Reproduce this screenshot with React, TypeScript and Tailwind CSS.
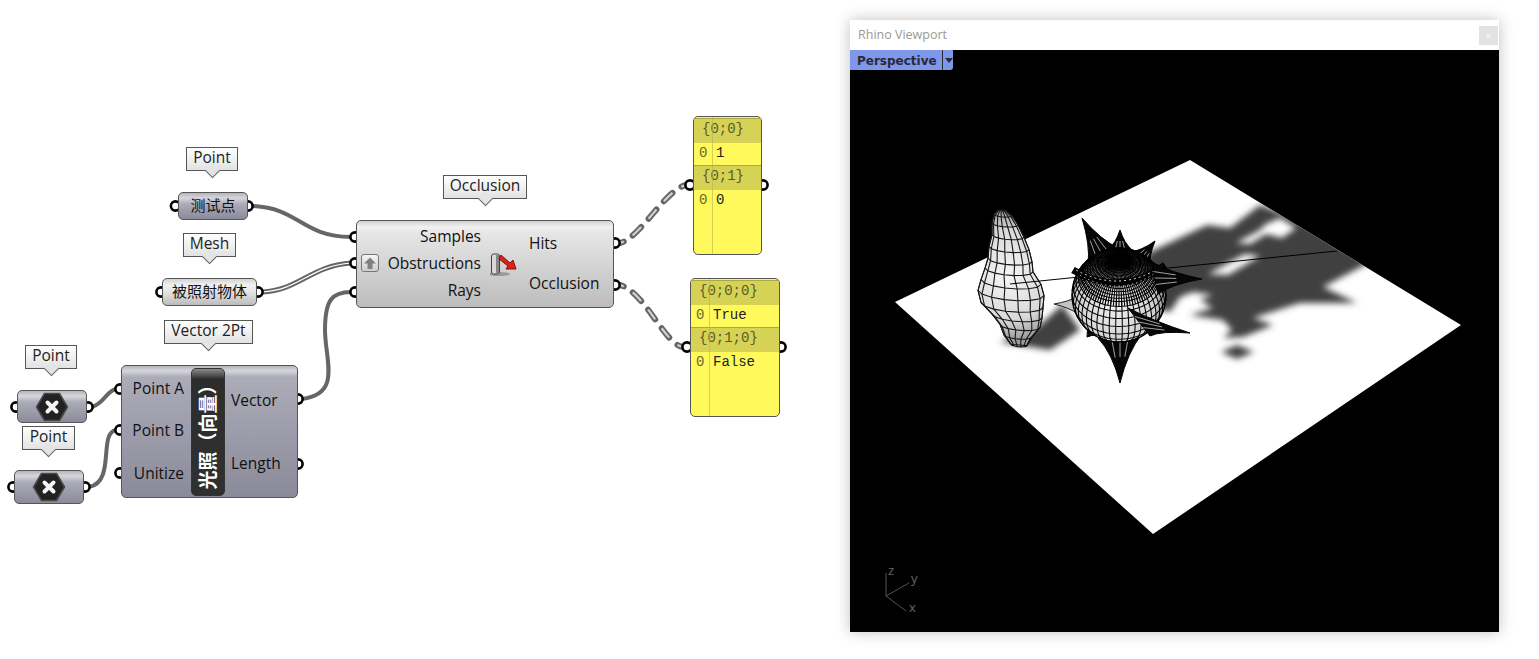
const UI_FONT = "font-['Open_Sans','Noto_Sans_CJK_SC',sans-serif]";
const LIGHT = "bg-[linear-gradient(#d2d2d2_0,#f1f1f1_6px,#e6e6e6_12px,#bcbcbc_100%)]";
const DARK = "bg-[linear-gradient(#b4b4bd_0,#d6d6dc_5px,#acacb8_11px,#8b8a9a_100%)]";

const grips = [
  [175.5, 206], [248, 206], [161, 292], [258, 292], [16, 407], [88, 407], [13, 487], [85, 487],
  [120, 389], [120, 430], [120, 473], [298, 399], [298, 464],
  [355, 237], [355, 263], [355, 292], [615, 243], [615, 285],
  [690, 185], [763, 185], [687, 347], [781, 347],
];

function Wires() {
  const dashed = ["M620 243C640 238 665 190 686 185", "M620 285C645 292 665 345 683 347"];
  return (
    <svg className="absolute left-0 top-0" width="850" height="659" fill="none">
      <g stroke="#666" strokeWidth="4">
        <path d="M252 206C300 208 300 236 351 237" />
        <path d="M302 399C342 394 325 360 325 330C325 300 332 292 351 292" />
        <path d="M92 407C105 403 106 391 116 389" />
        <path d="M89 487C116 482 98 433 116 430" />
      </g>
      <path d="M262 292C300 290 310 266 351 263" stroke="#666" strokeWidth="5" />
      <path d="M262 292C300 290 310 266 351 263" stroke="#fff" strokeWidth="1.2" />
      {dashed.map((d) => (
        <g key={d}>
          <path d={d} stroke="#666" strokeWidth="6" strokeDasharray="12 11" strokeDashoffset="8" strokeLinecap="round" />
          <path d={d} stroke="#d0d0d0" strokeWidth="2.2" strokeDasharray="12 11" strokeDashoffset="8" />
        </g>
      ))}
      {grips.map(([x, y]) => (
        <circle key={`${x}-${y}`} cx={x} cy={y} r="4.6" fill="#fff" stroke="#000" strokeWidth="2.6" />
      ))}
    </svg>
  );
}

function Tag({ label, className }: { label: string; className: string }) {
  return (
    <div className={`absolute flex h-[24px] items-center justify-center border border-[#555] bg-[linear-gradient(#fff,#e2e2e2)] pb-[2px] text-[15.5px] text-[#222] ${className}`}>
      <span className="relative z-10">{label}</span>
      <div className="absolute left-1/2 top-full -ml-[5.5px] -mt-[5.5px] size-[11px] rotate-45 border-b border-r border-[#666] bg-[#e4e4e4]" />
    </div>
  );
}

function Hex() {
  return (
    <svg width="34" height="30" viewBox="0 0 34 30">
      <path d="M9.5 1.5H24.5L32.5 15L24.5 28.5H9.5L1.5 15Z" fill="#222" stroke="#4a4a4a" strokeWidth="1.5" strokeLinejoin="round" />
      <path d="M12.5 10.5L21.5 19.5M21.5 10.5L12.5 19.5" stroke="#f4f4f4" strokeWidth="4" strokeLinecap="round" />
    </svg>
  );
}

function Panel({ className, rows }: { className: string; rows: [string, string][] }) {
  return (
    <div className={`absolute overflow-hidden rounded-[5px] border border-[#555] bg-[#fff95c] pt-[1px] font-['Liberation_Mono',monospace] text-[14px] leading-none ${className}`}>
      <div className="absolute bottom-0 left-[18px] top-0 w-px bg-[#b8b64a]/60" />
      {rows.map(([head, value]) => (
        <div key={head}>
          <div className="flex h-[25px] items-center border-t border-[#aaa83e] bg-[#d5d255] pb-[4px] pl-[8px] text-[#5a5a2c]">{head}</div>
          <div className="flex h-[22px] items-center pb-[2px] pl-[5px]">
            <span className="w-[17px] text-[#6a6826]">0</span>
            <span className="text-[#222]">{value}</span>
          </div>
        </div>
      ))}
    </div>
  );
}

// ---- viewport geometry ----
type P = [number, number];
const toPath = (pts: P[]) => pts.map((p, i) => `${i ? "L" : "M"}${p[0].toFixed(1)} ${p[1].toFixed(1)}`).join("");

const blobRows = [
  [210, 1002, 4], [215, 1003, 9], [224, 1005, 13], [236, 1008, 16], [248, 1009, 20], [260, 1010, 22], [270, 1009, 24],
  [282, 1011, 30], [293, 1011, 33], [305, 1012, 31], [316, 1017, 25], [326, 1020, 20], [336, 1018, 14], [345, 1019, 8],
];
const blobThetas = [-90, -62, -36, -12, 12, 36, 62, 90].map((d) => (d * Math.PI) / 180);
const blobPoint = ([y, cx, r]: number[], t: number): P => [cx + r * Math.sin(t), y + r * 0.22 * Math.cos(t) + r * 0.08 * Math.sin(t)];
const blobOutline = toPath([
  ...blobRows.map((row) => blobPoint(row, -Math.PI / 2)),
  ...[...blobRows].reverse().map((row) => blobPoint(row, Math.PI / 2)),
]) + "Z";
const blobLines = [
  ...blobRows.map((row) => toPath(blobThetas.map((t) => blobPoint(row, t)))),
  ...blobThetas.map((t) => toPath(blobRows.map((row) => blobPoint(row, t)))),
];

const C: P = [1119, 295];
const R = 47;
const TILT = (44 * Math.PI) / 180;
function sphere(latDeg: number, lonDeg: number): [number, number, number] {
  const lat = (latDeg * Math.PI) / 180;
  const lon = (lonDeg * Math.PI) / 180;
  const x = Math.cos(lat) * Math.sin(lon);
  const y = Math.sin(lat);
  const z = Math.cos(lat) * Math.cos(lon);
  return [C[0] + R * x, C[1] - R * (y * Math.cos(TILT) - z * Math.sin(TILT)), y * Math.sin(TILT) + z * Math.cos(TILT)];
}
function visible(samples: [number, number, number][]) {
  let d = "";
  let pen = false;
  for (const [x, y, z] of samples) {
    if (z < 0) {
      pen = false;
      continue;
    }
    d += `${pen ? "L" : "M"}${x.toFixed(1)} ${y.toFixed(1)}`;
    pen = true;
  }
  return d;
}
const range = (from: number, to: number, step: number) => {
  const out: number[] = [];
  for (let v = from; v <= to; v += step) out.push(v);
  return out;
};
const sphereLines = [
  ...[-70, -55, -40, -26, -12, 2, 14, 24, 30, 36, 40, 44, 48, 52, 56, 60, 64, 68, 72, 76, 80, 84].map((lat) =>
    visible(range(-180, 180, 5).map((lon) => sphere(lat, lon))),
  ),
  ...range(-180, 172, 8).map((lon) => visible(range(-85, 40, 5).map((lat) => sphere(lat, lon)))),
  ...range(-180, 176, 4).map((lon) => visible(range(30, 86, 4).map((lat) => sphere(lat, lon)))),
];

const spikes: { tip: P; a: P; b: P; light?: boolean }[] = [
  { tip: [1082, 218], a: [1088, 264], b: [1118, 248] },
  { tip: [1120, 230], a: [1108, 250], b: [1132, 250] },
  { tip: [1155, 241], a: [1130, 252], b: [1150, 268] },
  { tip: [1202, 279], a: [1152, 262], b: [1158, 294] },
  { tip: [1190, 333], a: [1128, 308], b: [1150, 336] },
  { tip: [1120, 383], a: [1098, 338], b: [1142, 334] },
  { tip: [1087, 337], a: [1086, 306], b: [1106, 338] },
  { tip: [1054, 304], a: [1078, 296], b: [1078, 314], light: true },
];

function Spike({ tip, a, b, light }: { tip: P; a: P; b: P; light?: boolean }) {
  const m: P = [(a[0] + b[0]) / 2, (a[1] + b[1]) / 2];
  // pull the flanks toward the spike's axis so the sides read concave
  const ca: P = [m[0] + (a[0] - m[0]) * 0.35 + (tip[0] - m[0]) * 0.35, m[1] + (a[1] - m[1]) * 0.35 + (tip[1] - m[1]) * 0.35];
  const cb: P = [m[0] + (b[0] - m[0]) * 0.35 + (tip[0] - m[0]) * 0.35, m[1] + (b[1] - m[1]) * 0.35 + (tip[1] - m[1]) * 0.35];
  const slits = [0.3, 0.5, 0.7].map((t): P => [a[0] + (b[0] - a[0]) * t, a[1] + (b[1] - a[1]) * t]);
  return (
    <g>
      <path
        d={`M${a[0]} ${a[1]}Q${ca[0]} ${ca[1]} ${tip[0]} ${tip[1]}Q${cb[0]} ${cb[1]} ${b[0]} ${b[1]}Z`}
        fill={light ? "#c4c4c4" : "#060606"}
        stroke={light ? "#222" : "#000"}
        strokeWidth="1"
        strokeLinejoin="round"
      />
      {!light && slits.map((p) => <path key={p[0]} d={toPath([p, [p[0] + (tip[0] - p[0]) * 0.45, p[1] + (tip[1] - p[1]) * 0.45]])} stroke="#e4e4e4" strokeWidth="0.7" />)}
    </g>
  );
}

function Scene() {
  return (
    <svg className="absolute inset-0" viewBox="850 50 649 582" width="649" height="582" fill="none">
      <defs>
        <filter id="soft" x="-10%" y="-10%" width="120%" height="120%">
          <feGaussianBlur stdDeviation="3.2" />
        </filter>
        <clipPath id="plane">
          <path d="M1190 160L1461 325L1153 534L895 302Z" />
        </clipPath>
        <radialGradient id="blobFill" gradientUnits="userSpaceOnUse" cx="1008" cy="275" r="65">
          <stop offset="0" stopColor="#f6f6f6" />
          <stop offset="0.7" stopColor="#d8d8d8" />
          <stop offset="1" stopColor="#9b9b9b" />
        </radialGradient>
        <radialGradient id="ballFill" gradientUnits="userSpaceOnUse" cx="1115" cy="305" r="50">
          <stop offset="0" stopColor="#f2f2f2" />
          <stop offset="0.8" stopColor="#cfcfcf" />
          <stop offset="1" stopColor="#8f8f8f" />
        </radialGradient>
      </defs>
      <path d="M1190 160L1461 325L1153 534L895 302Z" fill="#fff" />
      <g clipPath="url(#plane)">
        <g filter="url(#soft)" fill="#404040">
          <path d="M1260 205L1230 228L1207 225L1150 252L1120 300L1170 312L1180 297L1193 292L1213 295L1200 300L1213 308L1190 315L1223 320L1232 330L1223 338L1243 337L1273 325L1253 318L1290 306L1300 303L1357 303L1323 287L1370 262L1300 220Z" />
          <path d="M1000 342L1050 350L1080 330L1062 305L1040 325Z" />
          <path d="M1221 352L1237 345L1254 352L1237 359Z" />
        </g>
        <g filter="url(#soft)" fill="#fff">
          <path d="M1236 243L1260 230L1266 224L1280 218L1296 228L1282 238L1266 234L1250 244Z" />
          <path d="M1208 274L1245 254L1260 256L1228 275Z" />
        </g>
      </g>
      <path d={blobOutline} fill="url(#blobFill)" stroke="#111" strokeWidth="1" />
      {blobLines.map((d) => <path key={d} d={d} stroke="#161616" strokeWidth="1.1" />)}
      <path d="M1010 284L1337 251" stroke="#000" strokeWidth="1" />
      {spikes.slice(5).map((s) => <Spike key={s.tip[0]} {...s} />)}
      {spikes.slice(0, 3).map((s) => <Spike key={s.tip[0]} {...s} />)}
      <circle cx={C[0]} cy={C[1]} r={R} fill="url(#ballFill)" stroke="#000" strokeWidth="1.2" />
      {sphereLines.map((d, i) => <path key={i} d={d} stroke="#000" strokeWidth="1.05" />)}
      <ellipse cx="1120" cy="260" rx="13" ry="8" fill="#000" />
      <path d="M1073 270Q1120 298 1165 265" stroke="#000" strokeWidth="7" />
      <path d="M1076 270Q1120 294 1162 266" stroke="#ddd" strokeWidth="1" strokeDasharray="2 3" />
      <path d="M1080 275Q1120 299 1158 271" stroke="#ddd" strokeWidth="0.8" strokeDasharray="1.5 3" />
      {spikes.slice(3, 5).map((s) => <Spike key={s.tip[0]} {...s} />)}
      <path d="M886 596V573M886 596L909 583M886 596L906 611" stroke="#555" strokeWidth="1" />
      <g fill="#666" fontFamily="'Open Sans',sans-serif" fontSize="13">
        <text x="888" y="575">z</text>
        <text x="911" y="583">y</text>
        <text x="909" y="612">x</text>
      </g>
    </svg>
  );
}

export default function App() {
  return (
    <div className={`flex h-[659px] w-[1539px] overflow-hidden bg-white ${UI_FONT}`}>
      {/* Grasshopper canvas */}
      <div className="relative h-full w-[850px] shrink-0">
        <Wires />

        <Tag label="Point" className="left-[186px] top-[147px] w-[52px]" />
        <Tag label="Mesh" className="left-[183px] top-[233px] w-[53px]" />
        <Tag label="Vector 2Pt" className="left-[164px] top-[320px] w-[89px]" />
        <Tag label="Point" className="left-[25px] top-[345px] w-[52px]" />
        <Tag label="Point" className="left-[22px] top-[426px] w-[53px]" />
        <Tag label="Occlusion" className="left-[443px] top-[175px] w-[84px]" />

        <div className={`absolute left-[178px] top-[192px] flex h-[28px] w-[70px] items-center justify-center rounded-[5px] border border-[#555] pb-[2px] text-[15px] text-[#111] ${DARK}`}>测试点</div>
        <div className={`absolute left-[162px] top-[278px] flex h-[28px] w-[95px] items-center justify-center rounded-[5px] border border-[#555] pb-[2px] text-[15px] text-[#111] ${LIGHT}`}>被照射物体</div>

        <div className={`absolute left-[17px] top-[390px] flex h-[33px] w-[70px] items-center justify-center rounded-[5px] border border-[#555] ${DARK}`}><Hex /></div>
        <div className={`absolute left-[14px] top-[470px] flex h-[34px] w-[70px] items-center justify-center rounded-[5px] border border-[#555] ${DARK}`}><Hex /></div>

        {/* Vector 2Pt */}
        <div className={`absolute left-[121px] top-[365px] flex h-[133px] w-[177px] rounded-[5px] border border-[#555] text-[15.5px] text-[#111] ${DARK}`}>
          <div className="flex w-[62px] flex-col items-end justify-around pb-[2px] pt-[1px]">
            <span>Point A</span>
            <span>Point B</span>
            <span>Unitize</span>
          </div>
          <div className="ml-[7px] mt-[2px] flex h-[128px] w-[34px] items-center justify-center rounded-[5px] border border-[#333] bg-[linear-gradient(#8a8a8a_0,#4a4a4a_7px,#2d2d2d_10px,#303030_100%)]">
            <span className="-rotate-90 whitespace-nowrap text-[19px] font-bold leading-none text-white">光照（向量）</span>
          </div>
          <div className="ml-[6px] flex flex-col justify-around pb-[2px] pt-[3px]">
            <span>Vector</span>
            <span>Length</span>
          </div>
        </div>

        {/* Occlusion */}
        <div className={`absolute left-[356px] top-[220px] flex h-[88px] w-[258px] rounded-[5px] border border-[#555] text-[15.5px] text-[#111] ${LIGHT}`}>
          <div className="relative flex w-[124px] flex-col items-end justify-around pb-[3px] pt-[2px]">
            <span>Samples</span>
            <span>Obstructions</span>
            <span>Rays</span>
            <div className="absolute left-[4px] top-[33px] flex size-[18px] items-center justify-center rounded-[3px] border border-[#777] bg-[linear-gradient(#f4f4f4,#cfcfcf)]">
              <svg width="14" height="14" viewBox="0 0 14 14"><path d="M7 1.5L13 7.5H9.5V13H4.5V7.5H1Z" fill="#808080" /></svg>
            </div>
          </div>
          <div className="ml-[9px] flex w-[28px] items-center">
            <svg width="28" height="24" viewBox="0 0 28 24">
              <ellipse cx="9" cy="22" rx="11" ry="2" fill="#000" opacity="0.25" />
              <rect x="1.5" y="2" width="8" height="20" rx="2" fill="#d8d8d8" stroke="#444" />
              <rect x="6" y="2.5" width="3" height="19" fill="#888" />
              <path d="M11 3L20 11L23 8L26 17L16 17L18 14L9 7Z" fill="#e02215" stroke="#7a1510" strokeWidth="1" strokeLinejoin="round" />
            </svg>
          </div>
          <div className="ml-[11px] flex flex-col justify-around pb-[3px] pt-[2px]">
            <span>Hits</span>
            <span>Occlusion</span>
          </div>
        </div>

        <Panel className="left-[693px] top-[116px] h-[139px] w-[69px]" rows={[["{0;0}", "1"], ["{0;1}", "0"]]} />
        <Panel className="left-[690px] top-[278px] h-[139px] w-[90px]" rows={[["{0;0;0}", "True"], ["{0;1;0}", "False"]]} />
      </div>

      {/* Rhino viewport window */}
      <div className="mt-[20px] flex h-[612px] w-[649px] shrink-0 flex-col shadow-[0_0_14px_rgba(0,0,0,0.25)]">
        <div className="flex h-[30px] items-center justify-between pl-[8px] pr-[1px] text-[12.5px] text-[#999]">
          <span>Rhino Viewport</span>
          <div className="flex h-[19px] w-[19px] items-center justify-center bg-[#e2e2e2] text-[11px] font-bold leading-none text-[#f4f4f4]">×</div>
        </div>
        <div className="relative flex-1 bg-black">
          <Scene />
          <div className="absolute left-0 top-0 flex h-[20px] w-[103px] items-center rounded-br-[3px] bg-[#7f97ea] font-['DejaVu_Sans',sans-serif] text-[12px] font-bold leading-none text-[#2a2a33]">
            <span className="w-[92px] pl-[7px] pt-[1px]">Perspective</span>
            <span className="h-[20px] w-px bg-[#2a2a33]" />
            <span className="ml-[2px] h-0 w-0 border-x-[4px] border-t-[5px] border-x-transparent border-t-[#2a2a33]" />
          </div>
        </div>
      </div>
    </div>
  );
}
